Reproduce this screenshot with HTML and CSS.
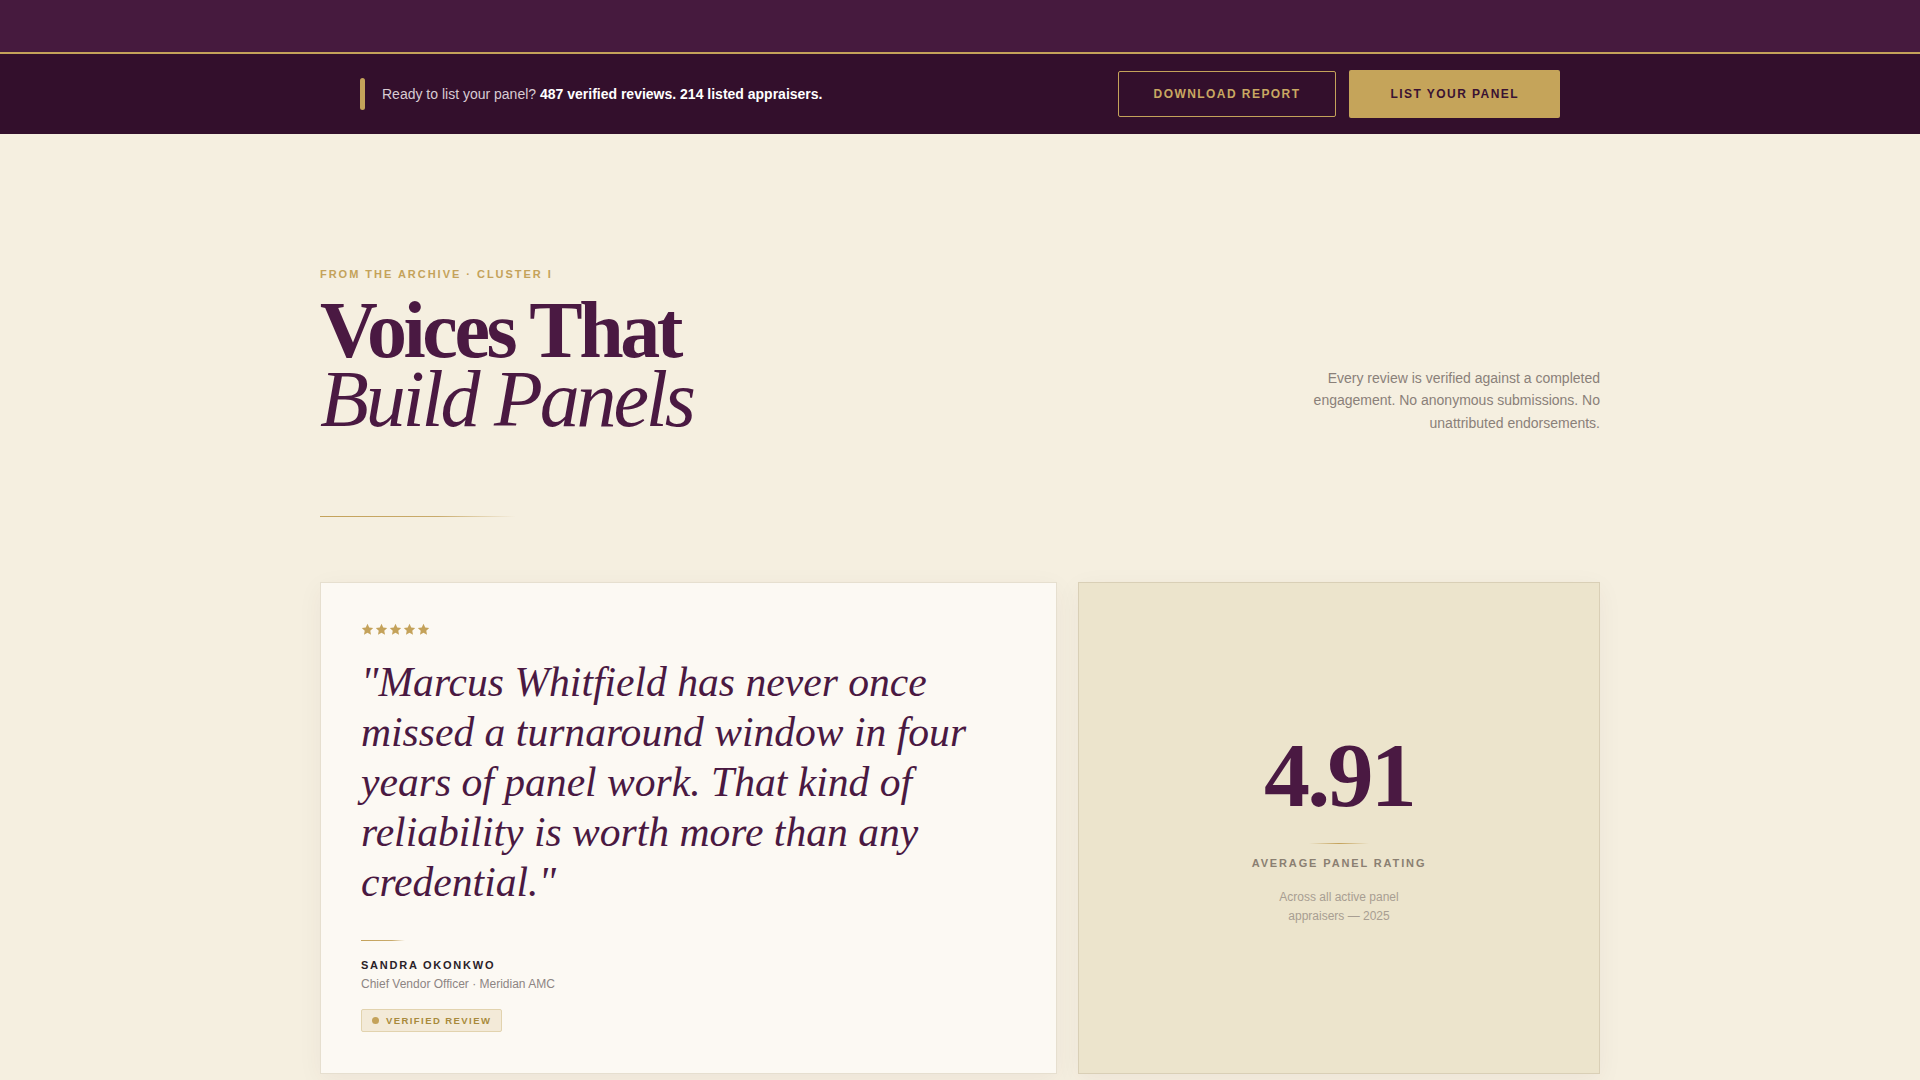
FILE: index.html
```html
<!DOCTYPE html>
<html lang="en">
<head>
<meta charset="utf-8">
<title>Voices That Build Panels</title>
<link rel="stylesheet" href="styles.css">
</head>
<body>
<div class="top-band"></div>
<div class="cta-bar">
  <div class="cta-inner">
    <div class="cta-msg">
      <span class="cta-accent"></span>
      <p class="cta-text">Ready to list your panel? <strong>487 verified reviews. 214 listed appraisers.</strong></p>
    </div>
    <div class="cta-actions">
      <a class="btn btn-outline" href="#">Download Report</a>
      <a class="btn btn-gold" href="#">List Your Panel</a>
    </div>
  </div>
</div>
<main class="section">
  <div class="container">
    <header class="section-head">
      <div class="head-left">
        <div class="eyebrow">From the Archive · Cluster I</div>
        <h1 class="title"><span class="title-line">Voices That</span><em class="title-line">Build Panels</em></h1>
      </div>
      <p class="head-note">Every review is verified against a completed engagement. No anonymous submissions. No unattributed endorsements.</p>
    </header>
    <div class="rule"></div>
    <div class="cards">
      <article class="quote-card">
        <div class="stars" aria-label="5 stars">
          <svg viewBox="0 0 24 24"><path d="M12 1.5l3.2 6.7 7.3.9-5.4 5.1 1.4 7.3L12 18l-6.5 3.5 1.4-7.3-5.4-5.1 7.3-.9z"/></svg>
          <svg viewBox="0 0 24 24"><path d="M12 1.5l3.2 6.7 7.3.9-5.4 5.1 1.4 7.3L12 18l-6.5 3.5 1.4-7.3-5.4-5.1 7.3-.9z"/></svg>
          <svg viewBox="0 0 24 24"><path d="M12 1.5l3.2 6.7 7.3.9-5.4 5.1 1.4 7.3L12 18l-6.5 3.5 1.4-7.3-5.4-5.1 7.3-.9z"/></svg>
          <svg viewBox="0 0 24 24"><path d="M12 1.5l3.2 6.7 7.3.9-5.4 5.1 1.4 7.3L12 18l-6.5 3.5 1.4-7.3-5.4-5.1 7.3-.9z"/></svg>
          <svg viewBox="0 0 24 24"><path d="M12 1.5l3.2 6.7 7.3.9-5.4 5.1 1.4 7.3L12 18l-6.5 3.5 1.4-7.3-5.4-5.1 7.3-.9z"/></svg>
        </div>
        <blockquote class="quote">"Marcus Whitfield has never once missed a turnaround window in four years of panel work. That kind of reliability is worth more than any credential."</blockquote>
        <div class="mini-rule"></div>
        <div class="author">Sandra Okonkwo</div>
        <div class="role">Chief Vendor Officer · Meridian AMC</div>
        <span class="badge"><span class="badge-dot"></span>Verified Review</span>
      </article>
      <aside class="stat-card">
        <div class="stat-num">4.91</div>
        <div class="stat-rule"></div>
        <div class="stat-label">Average Panel Rating</div>
        <p class="stat-sub">Across all active panel appraisers — 2025</p>
      </aside>
    </div>
  </div>
</main>
</body>
</html>
```
FILE: styles.css
```css
* { box-sizing: border-box; }
html, body { margin: 0; padding: 0; }
body {
  background: #f5efe0;
  font-family: "Liberation Sans", Arial, sans-serif;
  color: #2a2228;
}

.top-band {
  height: 52px;
  background: #461a3e;
}

.cta-bar {
  background: #330f2c;
  border-top: 2px solid #c4a25a;
  height: 82px;
  display: flex;
  align-items: center;
}
.cta-inner {
  width: 1200px;
  margin: 0 auto;
  display: flex;
  align-items: center;
  justify-content: space-between;
}
.cta-msg {
  display: flex;
  align-items: center;
  gap: 17px;
}
.cta-accent {
  width: 5px;
  height: 32px;
  border-radius: 3px;
  background: #c4a25a;
}
.cta-text {
  margin: 0;
  font-size: 14px;
  color: #d8cbd3;
}
.cta-text strong { color: #ffffff; font-weight: 700; }
.cta-actions {
  display: flex;
  align-items: center;
  gap: 13px;
}
.btn {
  display: inline-block;
  font-size: 12px;
  font-weight: 700;
  letter-spacing: 0.12em;
  text-transform: uppercase;
  text-decoration: none;
  line-height: 14px;
  border-radius: 2px;
}
.btn-outline {
  padding: 15px 34px 15px 35px;
  border: 1px solid #c4a25a;
  color: #c9a862;
}
.btn-gold {
  padding: 17px 41px 17px 42px;
  background: #c5a45a;
  color: #3a1232;
}

.section {
  padding: 134px 0 40px;
}
.container {
  width: 1280px;
  margin: 0 auto;
}
.section-head {
  display: flex;
  justify-content: space-between;
  align-items: flex-end;
}
.eyebrow {
  font-size: 11px;
  font-weight: 700;
  letter-spacing: 0.18em;
  text-transform: uppercase;
  color: #c4a25a;
}
.title {
  margin: 16px 0 0;
  font-family: "Liberation Serif", "Times New Roman", serif;
  font-size: 80px;
  line-height: 0.86;
  font-weight: 700;
  letter-spacing: -0.043em;
  color: #4a1942;
}
.title-line { display: block; }
.title em {
  font-weight: 400;
  font-style: italic;
  letter-spacing: -0.04em;
}
.head-note {
  margin: 0 0 -1px;
  max-width: 320px;
  text-align: right;
  font-size: 14px;
  line-height: 22.6px;
  color: #8a8079;
}

.rule {
  width: 196px;
  height: 1px;
  margin: 82px 0 65px;
  background: linear-gradient(90deg, #c4a25a 0%, #c9ab6c 60%, rgba(196,162,90,0) 100%);
}

.cards {
  display: grid;
  grid-template-columns: 737px 1fr;
  gap: 21px;
}
.quote-card {
  background: #fcf9f3;
  border: 1px solid #e6dfcf;
  box-shadow: 0 6px 24px rgba(74, 25, 66, 0.05);
  padding: 40px 40px 41px;
  display: flex;
  flex-direction: column;
  align-items: flex-start;
}
.stars {
  display: flex;
  gap: 1px;
  height: 13px;
  align-items: center;
}
.stars svg {
  width: 13px;
  height: 13px;
  fill: #c4a25a;
}
.quote {
  margin: 21px 0 33px;
  font-family: "Liberation Serif", "Times New Roman", serif;
  font-style: italic;
  font-size: 41.6px;
  line-height: 50px;
  color: #4a1942;
}
.mini-rule {
  width: 44px;
  height: 1px;
  background: linear-gradient(90deg, #c4a25a 0%, #c9ab6c 70%, rgba(196,162,90,0) 100%);
}
.author {
  margin-top: 18px;
  font-size: 11px;
  font-weight: 700;
  letter-spacing: 0.16em;
  text-transform: uppercase;
  color: #2a2228;
}
.role {
  margin-top: 6px;
  font-size: 12px;
  color: #8d8583;
}
.badge {
  margin-top: 18px;
  display: inline-flex;
  align-items: center;
  gap: 7px;
  height: 23px;
  padding: 0 10px 0 10px;
  background: #f3ead8;
  border: 1px solid #e2d3ae;
  border-radius: 2px;
  font-size: 9.5px;
  font-weight: 700;
  letter-spacing: 0.15em;
  text-transform: uppercase;
  color: #a88a3c;
}
.badge-dot {
  width: 7px;
  height: 7px;
  border-radius: 50%;
  background: #c4a25a;
}

.stat-card {
  background: #ece4cc;
  border: 1px solid #d9cfb6;
  box-shadow: 0 6px 24px rgba(74, 25, 66, 0.05);
  display: flex;
  flex-direction: column;
  align-items: center;
  justify-content: center;
  text-align: center;
}
.stat-num {
  font-family: "Liberation Serif", "Times New Roman", serif;
  font-size: 92px;
  line-height: 1;
  font-weight: 700;
  letter-spacing: -0.03em;
  color: #4a1942;
}
.stat-rule {
  margin-top: 22px;
  width: 60px;
  height: 1px;
  background: linear-gradient(90deg, rgba(196,162,90,0) 0%, #c4a25a 50%, rgba(196,162,90,0) 100%);
}
.stat-label {
  margin-top: 13px;
  font-size: 11px;
  font-weight: 700;
  letter-spacing: 0.17em;
  text-transform: uppercase;
  color: #8a7f72;
}
.stat-sub {
  margin: 19px 0 0;
  max-width: 160px;
  font-size: 12px;
  line-height: 19.5px;
  color: #a89e92;
}
```
